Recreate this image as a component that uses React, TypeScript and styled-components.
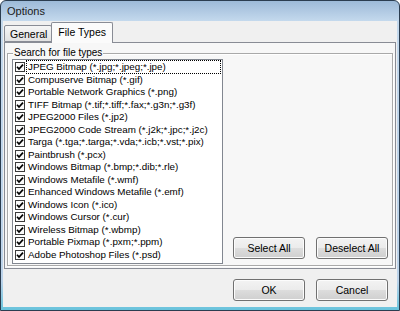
import React, { useState } from "react";
import styled, { createGlobalStyle } from "styled-components";

const GlobalStyle = createGlobalStyle`
  html, body {
    margin: 0;
    padding: 0;
    background: #ffffff;
  }
  * {
    box-sizing: border-box;
  }
`;

const Window = styled.div`
  width: 400px;
  height: 311px;
  border: 1px solid #2b3d50;
  border-radius: 6px 6px 0 0;
  background: linear-gradient(#9dbad8, #c4d9ed 20px, #bcd3ea 280px, #68c3dc);
  display: flex;
  flex-direction: column;
  font-family: "Liberation Sans", Arial, sans-serif;
  font-size: 10.5px;
  color: #000;
`;

const TitleBar = styled.div`
  height: 20px;
  padding-left: 6px;
  display: flex;
  align-items: center;
  font-size: 11px;
  color: #1a1a1a;
`;

const Body = styled.div`
  flex: 1;
  margin: 0 2px 3px 2px;
  padding: 1px 1px 0 1px;
  background: #f0f0f0;
  display: flex;
  flex-direction: column;
`;

const TabStrip = styled.div`
  height: 20px;
  display: flex;
  align-items: flex-end;
  position: relative;
  z-index: 1;
`;

const Tab = styled.div<{ $active?: boolean }>`
  height: ${(p) => (p.$active ? "21px" : "17px")};
  margin-bottom: ${(p) => (p.$active ? "-1px" : "0")};
  margin-left: ${(p) => (p.$active ? "-1px" : "0")};
  padding: ${(p) => (p.$active ? "0 6px 3px 6px" : "0 4px 0 5px")};
  display: flex;
  align-items: center;
  border: 1px solid #898c95;
  border-bottom: ${(p) => (p.$active ? "none" : "1px solid #898c95")};
  border-radius: 2px 2px 0 0;
  background: ${(p) =>
    p.$active ? "#fbfbfb" : "linear-gradient(#f6f6f6, #e2e2e2)"};
  font-size: 10.5px;
`;

const Panel = styled.div`
  height: 227px;
  border: 1px solid #898c95;
  background: #f7f7f7;
  padding: 4px 2px 2px 2px;
`;

const Group = styled.fieldset`
  margin: 0;
  height: 100%;
  padding: 0 4px 1px 4px;
  border: 1px solid #a9a9a9;
  box-shadow: inset 1px 1px 0 #ffffff, 1px 1px 0 #ffffff;
  display: flex;
  align-items: flex-end;
  min-width: 0;
`;

const Legend = styled.legend`
  margin-left: 1px;
  padding: 0 1px;
  font-size: 10px;
  line-height: 12px;
  background: #f7f7f7;
`;

const ListBox = styled.div`
  width: 211px;
  height: 100%;
  border: 1px solid #828790;
  background: #ffffff;
  padding: 1px 0 0 0;
  display: flex;
  flex-direction: column;
  font-size: 9.8px;
`;

const Row = styled.div`
  height: 12.5px;
  display: flex;
  align-items: center;
  padding-left: 2px;
  white-space: nowrap;
`;

const Label = styled.span<{ $focused?: boolean }>`
  flex: 1;
  margin-left: 2px;
  margin-right: 2px;
  padding: 0 1px;
  line-height: 12px;
  outline: ${(p) => (p.$focused ? "1px dotted #000" : "none")};
  outline-offset: 0;
`;

const Check = styled.svg`
  flex: none;
  display: block;
`;

const Side = styled.div`
  display: flex;
  gap: 11px;
  margin-left: 10px;
  margin-bottom: 5px;
`;

const Button = styled.button`
  width: 72px;
  height: 22px;
  padding: 0;
  border: 1px solid #707070;
  border-radius: 3px;
  background: linear-gradient(#f3f3f3 0%, #ebebeb 50%, #dddddd 51%, #cfcfcf 100%);
  box-shadow: inset 0 0 0 1px #fcfcfc;
  font-family: "Liberation Sans", Arial, sans-serif;
  font-size: 10.5px;
  color: #000;
`;

const Footer = styled.div`
  flex: 1;
  display: flex;
  justify-content: flex-end;
  align-items: flex-start;
  gap: 11px;
  padding: 10px 8px 0 0;
`;

const fileTypes = [
  "JPEG Bitmap (*.jpg;*.jpeg;*.jpe)",
  "Compuserve Bitmap (*.gif)",
  "Portable Network Graphics (*.png)",
  "TIFF Bitmap (*.tif;*.tiff;*.fax;*.g3n;*.g3f)",
  "JPEG2000 Files (*.jp2)",
  "JPEG2000 Code Stream (*.j2k;*.jpc;*.j2c)",
  "Targa (*.tga;*.targa;*.vda;*.icb;*.vst;*.pix)",
  "Paintbrush (*.pcx)",
  "Windows Bitmap (*.bmp;*.dib;*.rle)",
  "Windows Metafile (*.wmf)",
  "Enhanced Windows Metafile (*.emf)",
  "Windows Icon (*.ico)",
  "Windows Cursor (*.cur)",
  "Wireless Bitmap (*.wbmp)",
  "Portable Pixmap (*.pxm;*.ppm)",
  "Adobe Photoshop Files (*.psd)",
];

const CheckBox: React.FC<{ checked: boolean }> = ({ checked }) => (
  <Check width="10" height="10" viewBox="0 0 10 10">
    <rect x="0.5" y="0.5" width="9" height="9" fill="#fafafa" stroke="#3c3c3c" />
    {checked && (
      <polyline
        points="2,4.8 4,7 8,2.6"
        fill="none"
        stroke="#000"
        strokeWidth="1.7"
      />
    )}
  </Check>
);

const App: React.FC = () => {
  const [checked, setChecked] = useState(fileTypes.map(() => true));

  return (
    <Window>
      <GlobalStyle />
      <TitleBar>Options</TitleBar>
      <Body>
        <TabStrip>
          <Tab>General</Tab>
          <Tab $active>File Types</Tab>
        </TabStrip>
        <Panel>
          <Group>
            <Legend>Search for file types</Legend>
            <ListBox>
              {fileTypes.map((name, i) => (
                <Row
                  key={name}
                  onClick={() =>
                    setChecked(checked.map((c, j) => (j === i ? !c : c)))
                  }
                >
                  <CheckBox checked={checked[i]} />
                  <Label $focused={i === 0}>{name}</Label>
                </Row>
              ))}
            </ListBox>
            <Side>
              <Button onClick={() => setChecked(fileTypes.map(() => true))}>
                Select All
              </Button>
              <Button onClick={() => setChecked(fileTypes.map(() => false))}>
                Deselect All
              </Button>
            </Side>
          </Group>
        </Panel>
        <Footer>
          <Button>OK</Button>
          <Button>Cancel</Button>
        </Footer>
      </Body>
    </Window>
  );
};

export default App;
